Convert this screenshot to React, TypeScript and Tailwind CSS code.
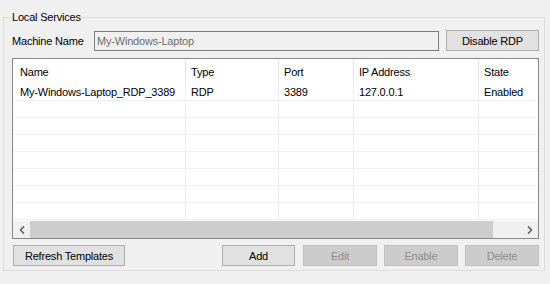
import React from "react";

const cols = [
  { w: "w-[173px]", pl: "pl-[7px]" },
  { w: "w-[93px]", pl: "pl-[5px]" },
  { w: "w-[75px]", pl: "pl-[5px]" },
  { w: "w-[125px]", pl: "pl-[5px]" },
  { w: "w-[110px]", pl: "pl-[5px]" },
];

const header = ["Name", "Type", "Port", "IP Address", "State"];
const rows: string[][] = [
  ["My-Windows-Laptop_RDP_3389", "RDP", "3389", "127.0.0.1", "Enabled"],
  ["", "", "", "", ""],
  ["", "", "", "", ""],
  ["", "", "", "", ""],
  ["", "", "", "", ""],
  ["", "", "", "", ""],
  ["", "", "", "", ""],
  ["", "", "", "", ""],
];

function Btn({ label, w, disabled }: { label: string; w: string; disabled?: boolean }) {
  return (
    <div
      className={
        "h-[21px] flex items-center justify-center border " +
        w +
        (disabled
          ? " bg-[#cccccc] border-[#bfbfbf] text-[#8d8d8d]"
          : " bg-[#e1e1e1] border-[#adadad] text-black")
      }
    >
      {label}
    </div>
  );
}

export default function App() {
  return (
    <div
      className="w-[550px] h-[284px] bg-[#f0f0f0] pl-[3px] pt-[17px] text-[11px] leading-[16px] tracking-[-0.2px] text-[#000000]"
      style={{ fontFamily: '"Liberation Sans", Arial, sans-serif' }}
    >
      <div className="relative w-[542px] h-[254px] border border-[#dcdcdc] pl-[8px] pt-[12px]">
        <div className="absolute left-[7px] top-[-9px] px-[1px] bg-[#f0f0f0]">Local Services</div>
        <div className="flex items-center h-[21px]">
          <div className="w-[82px]">Machine Name</div>
          <div className="w-[345px] h-[20px] mt-[1px] border border-[#7a7a7a] bg-[#f0f0f0] text-[#6d6d6d] flex items-center pl-[2px]">
            My-Windows-Laptop
          </div>
          <div className="ml-[7px]">
            <Btn label="Disable RDP" w="w-[93px]" />
          </div>
        </div>
        <div className="mt-[7px] w-[527px] h-[181px] border border-[#828790] bg-white flex flex-col overflow-hidden">
          <div className="flex-1 overflow-hidden">
            <div className="flex h-[25px] w-[700px]">
              {header.map((h, i) => (
                <div
                  key={i}
                  className={"flex items-center border-r border-[#e5e5e5] " + cols[i].w + " " + cols[i].pl}
                >
                  {h}
                </div>
              ))}
            </div>
            {rows.map((r, ri) => (
              <div key={ri} className="flex h-[17px] w-[700px] border-b border-[#f0f0f0]">
                {r.map((c, i) => (
                  <div
                    key={i}
                    className={"flex items-center border-r border-[#f0f0f0] " + cols[i].w + " " + cols[i].pl}
                  >
                    {c}
                  </div>
                ))}
              </div>
            ))}
          </div>
          <div className="h-[17px] flex bg-[#f0f0f0] shrink-0">
            <div className="w-[17px] flex items-center justify-center">
              <svg width="6" height="8" viewBox="0 0 6 8">
                <path d="M5 0.5 L1.5 4 L5 7.5" stroke="#606060" strokeWidth="1.6" fill="none" />
              </svg>
            </div>
            <div className="w-[463px] bg-[#cdcdcd]" />
            <div className="flex-1" />
            <div className="w-[17px] flex items-center justify-center">
              <svg width="6" height="8" viewBox="0 0 6 8">
                <path d="M1 0.5 L4.5 4 L1 7.5" stroke="#606060" strokeWidth="1.6" fill="none" />
              </svg>
            </div>
          </div>
        </div>
        <div className="mt-[6px] flex">
          <div className="ml-[1px]">
            <Btn label="Refresh Templates" w="w-[112px]" />
          </div>
          <div className="ml-[97px]">
            <Btn label="Add" w="w-[73px]" />
          </div>
          <div className="ml-[8px]">
            <Btn label="Edit" w="w-[74px]" disabled />
          </div>
          <div className="ml-[7px]">
            <Btn label="Enable" w="w-[74px]" disabled />
          </div>
          <div className="ml-[7px]">
            <Btn label="Delete" w="w-[74px]" disabled />
          </div>
        </div>
      </div>
    </div>
  );
}
